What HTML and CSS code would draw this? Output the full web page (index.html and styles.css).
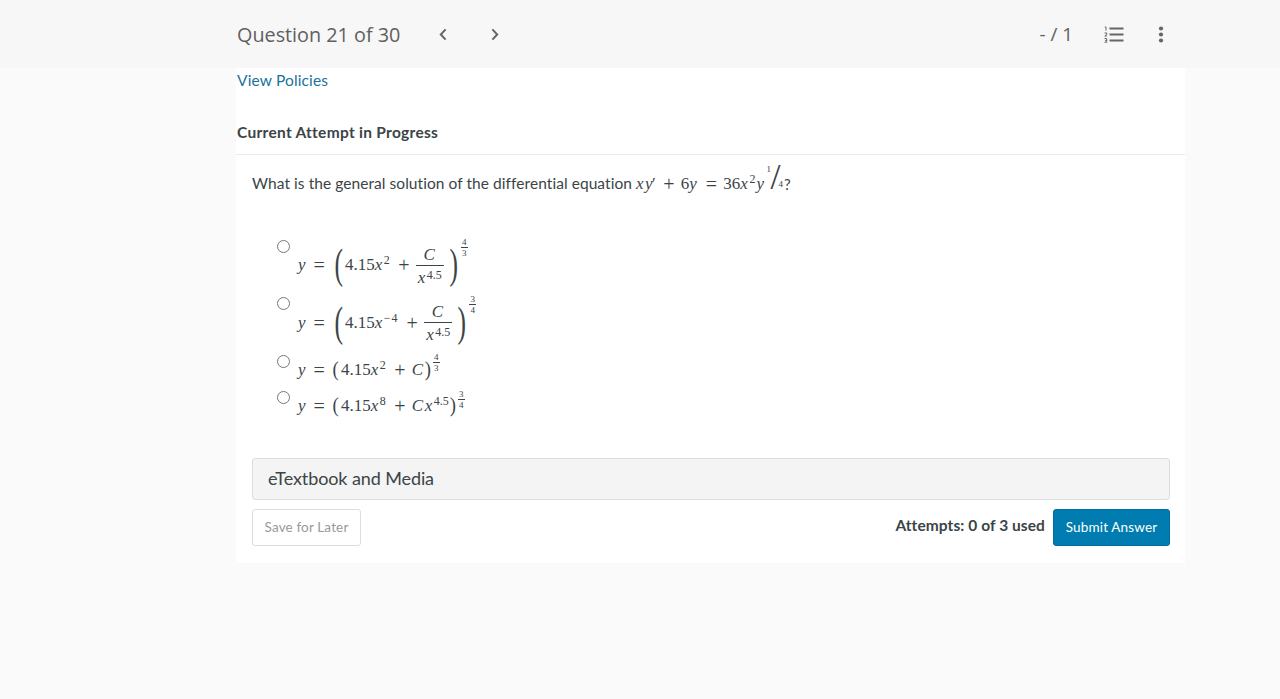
FILE: index.html
```html
<!DOCTYPE html>
<html lang="en">
<head>
  <meta charset="UTF-8" />
  <meta name="viewport" content="width=device-width, initial-scale=1.0" />
  <title>Question 21 of 30</title>
  <link rel="stylesheet" href="styles.css">
</head>
<body>
  <header class="topbar">
    <h1>Question 21 of 30</h1>
    <button class="icon-btn prev" aria-label="Previous question">
      <svg width="8" height="13" viewBox="0 0 8 13"><path d="M6.6 1.4 1.8 6.5l4.8 5.1" /></svg>
    </button>
    <button class="icon-btn next" aria-label="Next question">
      <svg width="8" height="13" viewBox="0 0 8 13"><path d="M1.4 1.4 6.2 6.5l-4.8 5.1" /></svg>
    </button>
    <span class="score">- / 1</span>
    <button class="icon-btn list" aria-label="Question list">
      <svg width="20" height="17" viewBox="0 0 20 17">
        <path class="lines" d="M5.5 2.5h14M5.5 8.5h14M5.5 14.5h14" />
        <path class="nums" d="M.8 1h1.2v3.5M.5 7h2.3v1.3L.8 10h2.3M.5 12.5h2.2v3.8H.5M1 14.4h1.7" />
      </svg>
    </button>
    <button class="icon-btn more" aria-label="More options">
      <svg width="6" height="17" viewBox="0 0 6 17"><circle cx="3" cy="2.5" r="2.1" /><circle cx="3" cy="8.5" r="2.1" /><circle cx="3" cy="14.5" r="2.1" /></svg>
    </button>
  </header>

  <main class="card">
    <a class="policies" href="#">View Policies</a>
    <h2>Current Attempt in Progress</h2>
    <div class="question">
      <p class="prompt">
        <span class="prompt-text">What is the general solution of the differential equation</span>
        <span class="math"><i>x</i><i>y</i><span class="prime">′</span><span class="op">+</span>6<i>y</i><span class="op">=</span>36<i>x</i><span class="sup">2</span><i>y</i><span class="bevel"><span class="over">1</span><span class="slash">/</span><span class="under">4</span></span></span><span class="mark">?</span>
      </p>

      <form class="choices">
        <label class="choice tall">
          <input type="radio" name="answer">
          <span class="math"><i>y</i><span class="op eq">=</span><span class="paren big">(</span>4.15<i>x</i><span class="sup">2</span><span class="op">+</span><span class="frac"><i>C</i><span class="den"><i>x</i><span class="sup">4.5</span></span></span><span class="paren big close">)</span><span class="exp"><span>4</span><span>3</span></span></span>
        </label>
        <label class="choice tall">
          <input type="radio" name="answer">
          <span class="math"><i>y</i><span class="op eq">=</span><span class="paren big">(</span>4.15<i>x</i><span class="sup neg">−4</span><span class="op">+</span><span class="frac"><i>C</i><span class="den"><i>x</i><span class="sup">4.5</span></span></span><span class="paren big close">)</span><span class="exp"><span>3</span><span>4</span></span></span>
        </label>
        <label class="choice">
          <input type="radio" name="answer">
          <span class="math"><i>y</i><span class="op eq">=</span><span class="paren">(</span>4.15<i>x</i><span class="sup">2</span><span class="op">+</span><i>C</i><span class="paren close">)</span><span class="exp"><span>4</span><span>3</span></span></span>
        </label>
        <label class="choice">
          <input type="radio" name="answer">
          <span class="math"><i>y</i><span class="op eq">=</span><span class="paren">(</span>4.15<i>x</i><span class="sup">8</span><span class="op">+</span><i>C</i><i>x</i><span class="sup">4.5</span><span class="paren close">)</span><span class="exp"><span>3</span><span>4</span></span></span>
        </label>
      </form>

      <div class="resource">eTextbook and Media</div>
      <div class="actions">
        <button class="btn save">Save for Later</button>
        <span class="attempts">Attempts: 0 of 3 used</span>
        <button class="btn submit">Submit Answer</button>
      </div>
    </div>
  </main>
</body>
</html>
```
FILE: styles.css
```css
* {
  box-sizing: border-box;
}
body {
  margin: 0;
  background: #fafafa;
  color: #3b4447;
  font-family: Lato, sans-serif;
  font-size: 16px;
  font-variant-ligatures: none;
}
h1, h2, p {
  margin: 0;
}
.topbar {
  display: flex;
  align-items: center;
  height: 68px;
  padding: 0 116px 0 237px;
  background: #f7f7f7;
  color: #5f5f5f;
  font-family: "Open Sans", sans-serif;
}
.topbar h1 {
  width: 163px;
  font-size: 19.8px;
  font-weight: 400;
  white-space: nowrap;
}
.icon-btn {
  display: flex;
  padding: 0;
  border: 0;
  background: none;
}
.icon-btn svg {
  fill: none;
  stroke: #666;
  stroke-width: 2;
}
.prev {
  margin-left: 39px;
}
.next {
  margin-left: 44px;
}
.score {
  margin-left: auto;
  padding-bottom: 1px;
  font-size: 18.8px;
}
.list {
  margin-left: 31px;
}
.icon-btn .nums {
  stroke-width: 1;
}
.more {
  margin-left: 34px;
}
.more svg {
  fill: #666;
  stroke: none;
}
.card {
  width: 949px;
  height: 495px;
  margin-left: 236px;
  background: #fff;
}
.policies {
  display: block;
  padding: 2px 1px 0;
  line-height: 20px;
  font-size: 15.5px;
  letter-spacing: 0.15px;
  color: #1a7298;
  text-decoration: none;
}
h2 {
  height: 65px;
  padding: 32px 1px 0;
  border-bottom: 1px solid #e9e9e9;
  font-size: 15.5px;
  letter-spacing: 0.29px;
  line-height: 20px;
  font-weight: 700;
}
.question {
  padding: 0 15px 0 16px;
}
.prompt {
  display: flex;
  align-items: center;
  height: 57px;
}
.prompt-text {
  width: 384px;
  padding-bottom: 2px;
  font-size: 15.5px;
  letter-spacing: 0.06px;
  white-space: nowrap;
}
.math {
  display: flex;
  align-items: center;
  font-family: "Liberation Serif", serif;
  font-size: 17px;
  line-height: 20px;
  white-space: nowrap;
}
.math i {
  letter-spacing: 1.5px;
}
.prime {
  margin-left: -2px;
}
.op {
  width: 12px;
  margin: 0 6px 0 7px;
  font-size: 20px;
  text-align: center;
}
.sup {
  position: relative;
  top: -5px;
  margin-right: 1px;
  font-size: 12px;
  line-height: 12px;
}
.neg {
  letter-spacing: 0.8px;
}
.bevel {
  display: flex;
  align-items: center;
  position: relative;
  top: -7px;
  margin-right: 1px;
  font-size: 9px;
}
.over {
  width: 4px;
  margin: -15px 0 0 1px;
}
.slash {
  font-size: 36px;
}
.under {
  margin: 14px 0 0 -2px;
}
.mark {
  font-size: 15px;
}
.choices {
  padding: 24px 0 0 25px;
}
.choice {
  display: flex;
  height: 36.5px;
}
.choice .math {
  padding-top: 1px;
}
.choice.tall {
  height: 57.5px;
}
.choice input {
  width: 13px;
  height: 13px;
  margin: 3.5px 8px 0 0;
}
.eq {
  margin: 0 8px 0 6px;
}
.paren {
  width: 8px;
  transform: scale(1.1, 1.25);
}
.paren.close {
  width: 6px;
}
.paren.big {
  width: 12px;
  padding-left: 3px;
  transform: scale(1.5, 2.5);
}
.paren.big.close {
  width: 14px;
  padding-left: 6px;
}
.frac {
  display: flex;
  flex-direction: column;
  align-items: center;
  width: 28px;
}
.den {
  display: flex;
  width: 28px;
  justify-content: center;
  align-items: center;
  padding-top: 2px;
  border-top: 1px solid #3b4447;
}
.tall .frac {
  padding-top: 2px;
}
.den .sup {
  top: -3px;
  margin-right: 0;
}
.exp {
  display: flex;
  flex-direction: column;
  position: relative;
  top: -7px;
  width: 7px;
  margin-left: 2px;
  font-size: 9px;
  line-height: 10px;
  text-align: center;
}
.exp span + span {
  border-top: 1px solid #3b4447;
}
.tall .exp {
  top: -18px;
  margin-left: 3px;
}
.resource {
  height: 42px;
  margin-top: 34px;
  padding: 0 15px;
  border: 1px solid #ddd;
  border-radius: 3px;
  background: #f4f4f4;
  font-size: 18px;
  letter-spacing: -0.1px;
  line-height: 39px;
}
.actions {
  display: flex;
  align-items: center;
  margin-top: 9px;
}
.btn {
  height: 37px;
  padding: 0 0 1px;
  border: 1px solid #ddd;
  border-radius: 3px;
  background: #fff;
  font-family: inherit;
  font-size: 13.5px;
  letter-spacing: 0.15px;
}
.save {
  width: 109px;
  color: #999;
}
.attempts {
  margin: -5px 8px 0 auto;
  font-size: 15.5px;
  letter-spacing: 0.08px;
  font-weight: 700;
}
.submit {
  width: 117px;
  border-color: #006f9f;
  background: #007cb0;
  color: #fff;
}
```
